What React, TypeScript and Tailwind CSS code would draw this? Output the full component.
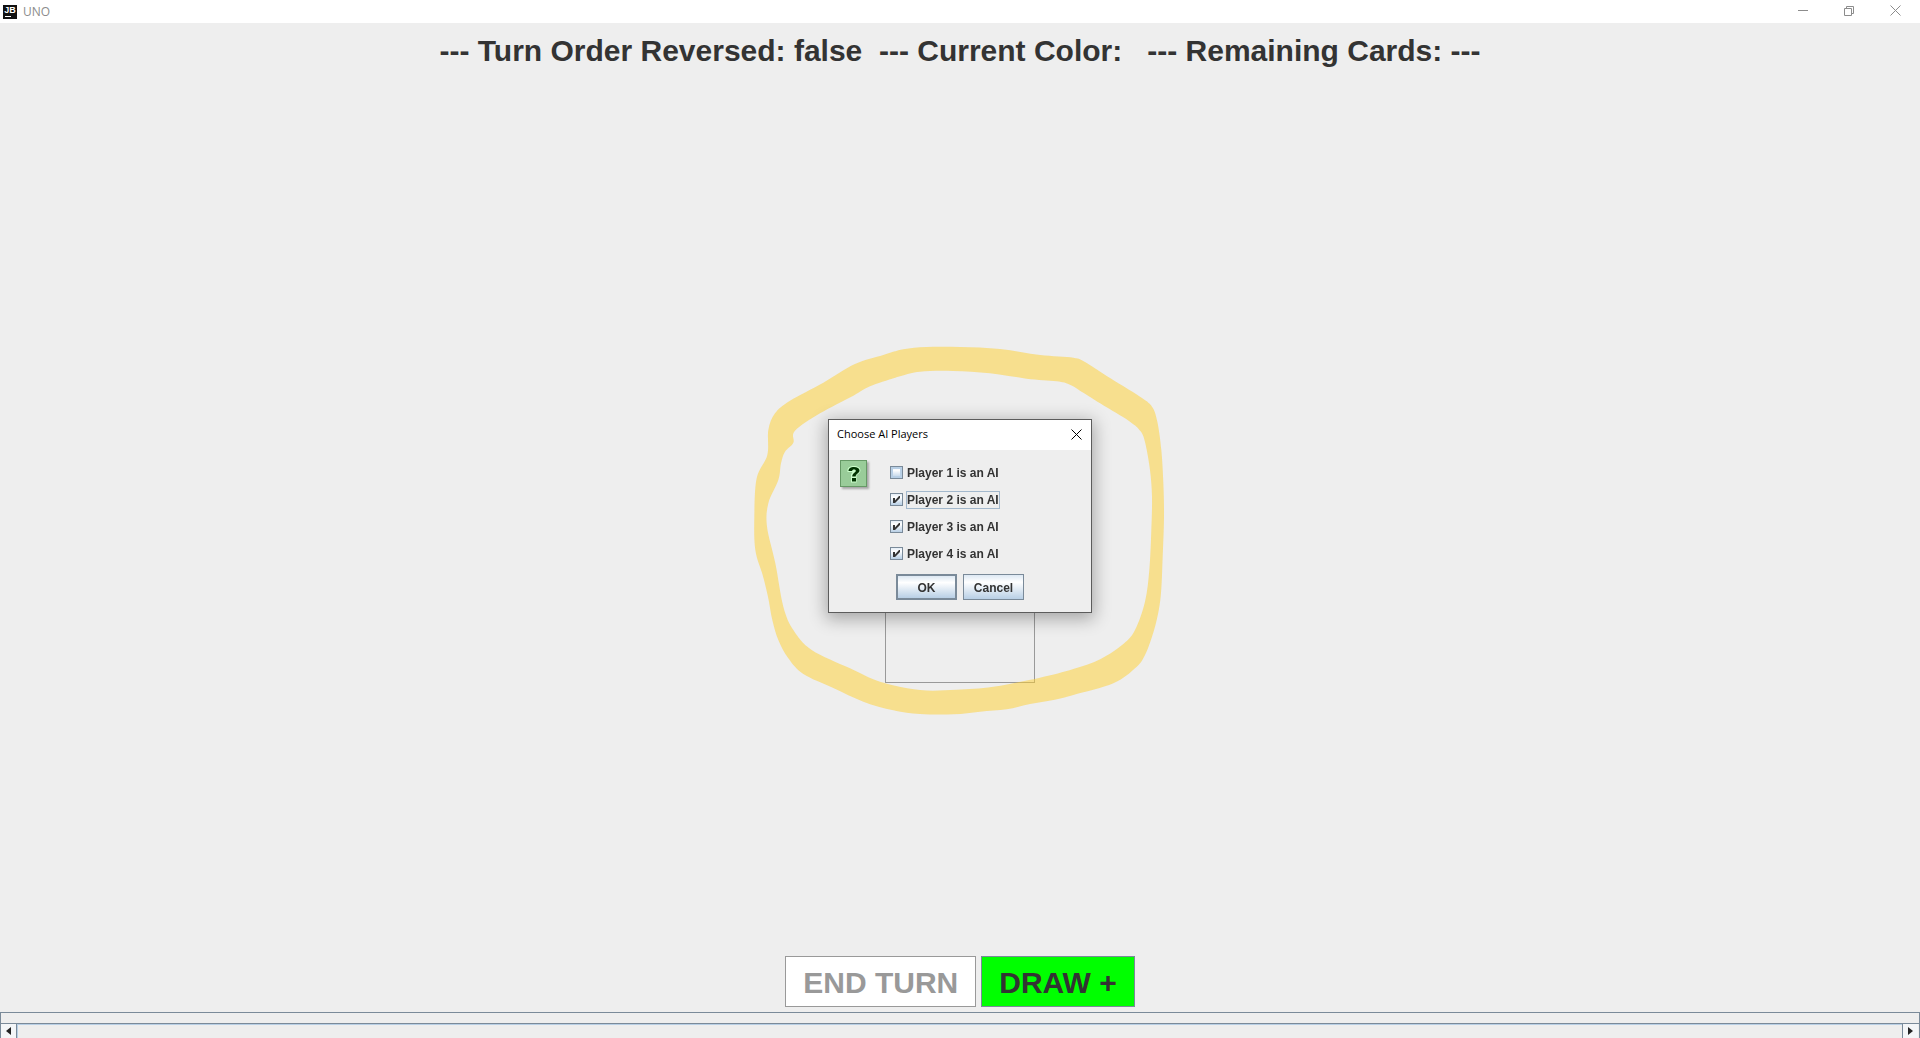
import { useState } from "react";

type Point = [number, number];

const OUTER: Point[] = [
  [85, 300], [105, 250], [150, 212], [250, 158], [345, 102], [430, 75], [490, 58], [560, 51], [660, 51],
  [780, 57], [900, 75], [1000, 83], [1035, 96], [1100, 138], [1200, 200], [1236, 230], [1252, 275],
  [1264, 360], [1270, 460], [1272, 560], [1268, 680], [1262, 800], [1245, 890], [1215, 975], [1185, 1015],
  [1120, 1060], [1000, 1095], [940, 1110], [870, 1122], [800, 1138], [720, 1145], [640, 1153], [540, 1152],
  [460, 1141], [370, 1115], [280, 1074], [190, 1032], [145, 985], [115, 930], [97, 870], [84, 800],
  [68, 735], [46, 660], [43, 560], [50, 445], [82, 375],
];

const INNER: Point[] = [
  [165, 302], [160, 338], [135, 365], [123, 400], [115, 450], [85, 520], [81, 590], [106, 700], [130, 830],
  [160, 900], [215, 960], [330, 1015], [420, 1055], [540, 1080], [650, 1079], [760, 1070], [900, 1043],
  [1000, 1017], [1082, 987], [1150, 942], [1185, 900], [1215, 815], [1228, 720], [1234, 600], [1236, 500],
  [1230, 420], [1216, 340], [1202, 304], [1170, 275], [1100, 232], [1030, 188], [990, 164], [950, 154],
  [860, 146], [750, 130], [640, 123], [540, 125], [480, 139], [390, 169], [340, 197], [240, 250],
];

/** Closed smooth curve through all the points. */
function smooth(points: Point[]): string {
  const n = points.length;
  const at = (i: number) => points[(i + n) % n];
  let d = `M${points[0][0]} ${points[0][1]}`;
  for (let i = 0; i < n; i++) {
    const [a, b, c, e] = [at(i - 1), at(i), at(i + 1), at(i + 2)];
    d += `C${b[0] + (c[0] - a[0]) / 6} ${b[1] + (c[1] - a[1]) / 6} ${c[0] - (e[0] - b[0]) / 6} ${c[1] - (e[1] - b[1]) / 6} ${c[0]} ${c[1]}`;
  }
  return d + "Z";
}

function AppIcon() {
  return (
    <span className="flex h-3.5 w-3.5 flex-col items-center bg-[#111] pt-px text-white">
      <span className="text-[9px] leading-[9px] font-bold">JB</span>
      <span className="mt-px ml-0.5 h-px w-1.5 self-start bg-white" />
    </span>
  );
}

function CloseIcon() {
  return (
    <svg width="11" height="11" viewBox="0 0 11 11" stroke="currentColor" fill="none" aria-hidden="true">
      <path d="M0.5 0.5 10.5 10.5M10.5 0.5 0.5 10.5" />
    </svg>
  );
}

function TitleBar() {
  const button = "flex h-full w-[46px] items-center justify-center";
  return (
    <header className="flex h-[23px] items-center bg-white pr-0.5 pl-[3px] text-[#8c8c8c]">
      <AppIcon />
      <h1 className="ml-1.5 flex-1 font-['Open_Sans',sans-serif] text-xs">UNO</h1>
      <div className="flex h-[21px] self-start">
        <button className={button} aria-label="Minimize">
          <svg width="10" height="11" viewBox="0 0 10 11" stroke="currentColor" aria-hidden="true">
            <path d="M0 5.5H10" />
          </svg>
        </button>
        <button className={button} aria-label="Restore">
          <svg width="10" height="10" viewBox="0 0 10 10" stroke="currentColor" fill="none" aria-hidden="true">
            <path d="M0.5 2.5H7.5V9.5H0.5ZM2.5 2.5V0.5H9.5V7.5H7.5" />
          </svg>
        </button>
        <button className={button} aria-label="Close">
          <CloseIcon />
        </button>
      </div>
    </header>
  );
}

function QuestionIcon() {
  return (
    <div className="flex h-[27px] w-[27px] items-center justify-center border border-[#669966] bg-[#99cc99] shadow-[2px_2px_2px_rgba(0,0,0,0.3)]">
      <svg width="16" height="18" viewBox="0 0 16 18" fill="none" aria-hidden="true">
        <path d="M1.5 7V5C2 2 4.5 1 8 1C11.500 1 14.500 2.500 14.500 5.500C14.500 8 12 9 10.500 10V17.500H5V12V9.500L6.500 7Z" fill="#ccffcc" />
        <path d="M2.500 6C2.500 3.200 4.800 2 8 2C11.200 2 13.500 3.300 13.500 5.500C13.500 8.300 9.700 8.500 9.700 11.500H6.200C6.200 8 9.800 7.800 9.800 5.700C9.800 4.800 9 4.400 8 4.400C6.800 4.400 6.100 5 6.100 6Z" fill="#003300" />
        <path d="M6 13H10V16.500H6Z" fill="#003300" />
      </svg>
    </div>
  );
}

function PlayerOption({ player, initial, focused }: { player: number; initial: boolean; focused?: boolean }) {
  const [checked, setChecked] = useState(initial);
  return (
    <label className="flex h-[27px] items-center gap-[3px]">
      <span className="relative h-[13px] w-[13px]">
        <input
          type="checkbox"
          checked={checked}
          onChange={(e) => setChecked(e.target.checked)}
          className="block h-[13px] w-[13px] appearance-none border border-[#7a8a99] bg-linear-to-b from-[#e4edf6] via-white via-30% to-[#b8cfe5] not-checked:shadow-[inset_0_0_0_2px_#b8cfe5] focus:outline-none"
        />
        {checked && (
          <svg className="pointer-events-none absolute inset-0" width="13" height="13" viewBox="0 0 13 13" fill="#333" aria-hidden="true">
            <path d="M3 5H5V7.5L9 3H10V5L5 10H3Z" />
          </svg>
        )}
      </span>
      <span className={focused ? "border border-[#a3b8cc] leading-4" : "border border-transparent leading-4"}>
        Player {player} is an AI
      </span>
    </label>
  );
}

function Dialog() {
  const button =
    "h-[26px] w-[61px] border-[#7a8a99] bg-linear-to-b from-[#dde8f3] via-white via-30% to-[#b8cfe5] pt-0.5 text-center";
  return (
    <div className="fixed inset-0 grid place-items-center pb-1.5">
      <section
        role="dialog"
        aria-labelledby="dialog-title"
        className="w-[264px] border border-[#5c5c5c] bg-[#eeeeee] text-xs font-bold text-[#333] shadow-[0_4px_16px_2px_rgba(0,0,0,0.3)]"
      >
        <div className="flex h-[30px] items-center justify-between bg-white pr-[9px] pb-0.5 pl-2 text-black">
          <h2 id="dialog-title" className="font-['Open_Sans',sans-serif] text-[11px] font-normal">
            Choose AI Players
          </h2>
          <button aria-label="Close dialog">
            <CloseIcon />
          </button>
        </div>
        <div className="flex gap-[23px] px-[11px] pt-[9px]">
          <div className="pt-px">
            <QuestionIcon />
          </div>
          <div>
            <PlayerOption player={1} initial={false} />
            <PlayerOption player={2} initial focused />
            <PlayerOption player={3} initial />
            <PlayerOption player={4} initial />
          </div>
        </div>
        <div className="flex justify-center gap-1.5 pt-[7px] pb-3">
          <button className={button + " border-2"}>OK</button>
          <button className={button + " border"}>Cancel</button>
        </div>
      </section>
    </div>
  );
}

function HandScrollPane() {
  const arrow = "flex h-full w-4 items-center justify-center bg-[#f4f6f8]";
  return (
    <div className="h-[26px] overflow-hidden border border-b-0 border-[#7a8a99]">
      <div className="h-2.5" />
      <div className="flex h-[15px] border-t border-[#7a8a99] pr-px">
        <button className={arrow + " border-r border-[#7a8a99]"} aria-label="Scroll left">
          <svg width="5" height="8" viewBox="0 0 5 8" fill="#222" aria-hidden="true">
            <path d="M5 0V8L0 4Z" />
          </svg>
        </button>
        <div className="flex-1 border-t border-l border-[#b8cfe5]" />
        <button className={arrow + " border-l border-[#7a8a99]"} aria-label="Scroll right">
          <svg width="5" height="8" viewBox="0 0 5 8" fill="#222" aria-hidden="true">
            <path d="M0 0V8L5 4Z" />
          </svg>
        </button>
      </div>
    </div>
  );
}

export default function App() {
  return (
    <div className="flex min-h-screen flex-col bg-[#eeeeee] font-['Liberation_Sans',Arial,sans-serif]">
      <TitleBar />
      <p className="pt-2.5 text-center text-[30px] leading-9 font-bold whitespace-pre text-[#333]">
        {"--- Turn Order Reversed: false  --- Current Color:   --- Remaining Cards: ---"}
      </p>
      <main className="grid flex-1 place-items-center pt-[115px]">
        <div className="h-[225px] w-[150px] border border-[#999]" />
      </main>
      <div className="flex justify-center gap-[5px] pb-[5px] text-[30px] leading-9 font-bold">
        <button disabled className="h-[51px] border border-[#999] bg-white px-[17px] pt-0.5 text-[#999]">
          END TURN
        </button>
        <button className="h-[51px] border border-[#7a8a99] bg-[#00ff00] px-[17px] pt-0.5 text-[#333]">DRAW +</button>
      </div>
      <HandScrollPane />
      <div className="pointer-events-none fixed inset-0 grid place-items-center pt-[22px]">
        <svg width="420" height="380" viewBox="30 30 1260 1140" aria-hidden="true">
          <path d={smooth(OUTER) + smooth(INNER)} fill="#ffd02e" fillOpacity="0.5" fillRule="evenodd" />
        </svg>
      </div>
      <Dialog />
    </div>
  );
}
